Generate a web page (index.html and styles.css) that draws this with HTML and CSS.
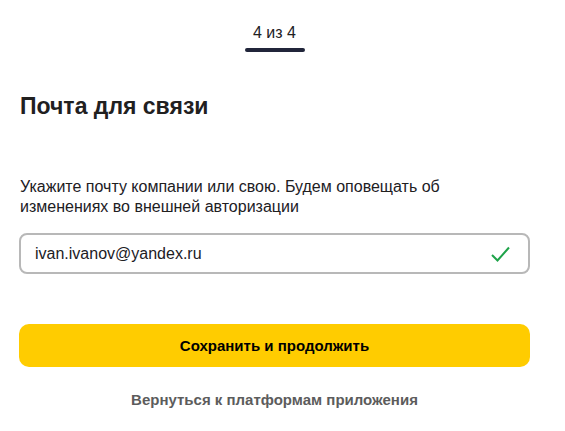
FILE: index.html
```html
<!DOCTYPE html>
<html lang="ru">
<head>
  <meta charset="UTF-8" />
  <meta name="viewport" content="width=device-width, initial-scale=1.0"/>
  <title>Почта для связи</title>
  <link rel="stylesheet" href="styles.css">
</head>
<body>
  <div class="steps">
    <span class="steps-label">4 из 4</span>
    <span class="steps-bar"></span>
  </div>

  <h1>Почта для связи</h1>

  <form class="mail-form">
    <p class="hint">Укажите почту компании или свою. Будем оповещать об изменениях во внешней авторизации</p>

    <label class="field">
      <input type="email" name="email" value="ivan.ivanov@yandex.ru" />
      <svg class="check" width="22" height="22" viewBox="0 0 22 22" fill="none">
        <path d="M3 12l5.5 5.5L20 4.5" stroke="#1fa34a" stroke-width="2"/>
      </svg>
    </label>

    <button type="submit">Сохранить и продолжить</button>
    <a class="back" href="#">Вернуться к платформам приложения</a>
  </form>
</body>
</html>
```

FILE: styles.css
```css
body {
  font-family: "Liberation Sans", Arial, sans-serif;
  color: #21201f;
  margin: 0;
  padding: 0 35px 0 19px;
}
.steps {
  display: flex;
  flex-direction: column;
  align-items: center;
  padding-top: 23px;
}
.steps-label {
  font-size: 16px;
  line-height: 20px;
}
.steps-bar {
  width: 60px;
  height: 4px;
  border-radius: 2px;
  background: #21253a;
  margin-top: 5px;
}
h1 {
  font-size: 23px;
  font-weight: bold;
  margin: 40px 0 0 1px;
  line-height: 28px;
}
.hint {
  font-size: 16px;
  line-height: 20px;
  margin: 57px 0 16px 1px;
  max-width: 440px;
}
.field {
  display: flex;
  align-items: center;
  border: 2px solid #b8b8b8;
  border-radius: 8px;
  height: 37px;
  padding: 0 17px 0 14px;
}
.field input {
  flex: 1;
  border: none;
  outline: none;
  font: 16px "Liberation Sans", Arial, sans-serif;
  color: #21201f;
  padding: 0;
  caret-color: #000;
}
.check {
  display: block;
}
button {
  display: block;
  width: 100%;
  height: 43px;
  margin-top: 50px;
  background: #ffcc00;
  border: none;
  border-radius: 10px;
  font: bold 15px "Liberation Sans", Arial, sans-serif;
  color: #000;
  cursor: pointer;
}
.back {
  display: block;
  text-align: center;
  margin-top: 24px;
  font-size: 15px;
  font-weight: bold;
  color: #5c5c5c;
  text-decoration: none;
}
```
